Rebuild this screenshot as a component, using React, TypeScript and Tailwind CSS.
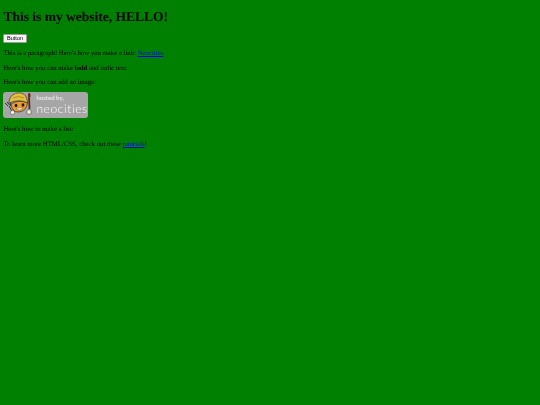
export default function App() {
  return (
    <div className="flow-root min-h-[405px] bg-[#008000] px-[3.375px] text-black font-['Liberation_Serif',serif] text-[6.75px] leading-[9px] [text-rendering:geometricPrecision]">
      <div className="blur-[0.2px]">
        <h1 className="mt-[9.05px] mb-[9.05px] text-[13.5px] leading-[15.6px] font-bold">This is my website, HELLO!</h1>
        <button className="mb-[6.75px] block h-[9px] w-[23.4px] rounded-[1.3px] border-[0.85px] border-[#9a9a9a] bg-[#f4f4f4] font-['Liberation_Sans',sans-serif] text-[5.6px] leading-[6px] text-black">Button</button>
        <p className="my-[5.35px]">This is a paragraph! Here's how you make a link: <a className="text-[#0000ee] underline" href="#">Neocities</a>.</p>
        <p className="my-[5.35px]">Here's how you can make <strong>bold</strong> and <em>italic</em> text.</p>
        <p className="my-[5.35px]">Here's how you can add an image:</p>
        <div className="mt-[5.35px] mb-[6.75px] h-[26px] w-[85px]">
          <div className="relative h-[26px] w-[85px] rounded-[3px] bg-[#a6a6a6]">
            <svg className="absolute left-0 top-0" width="32" height="26" viewBox="0 0 32 26">
              <path d="M2 11 L5 14 M4 10 L6.5 13 M7 10 L7.5 14 M6 14 L9 19" stroke="#333" strokeWidth="1" fill="none" />
              <circle cx="9.5" cy="20.5" r="2.2" fill="#f4f0e0" stroke="#444" strokeWidth="0.6" />
              <path d="M26 3 L26.5 17" stroke="#5a2d12" strokeWidth="1.8" />
              <path d="M25 2 L26 0.5 L27.5 2 L27.5 5 L25.5 5Z" fill="#7a2a1a" />
              <circle cx="26" cy="20" r="2.4" fill="#f4f0e0" stroke="#444" strokeWidth="0.6" />
              <path d="M8 12 Q9 20 15 20 Q23 20 24.5 11 Q16 7 8 12Z" fill="#ee9a2c" stroke="#333" strokeWidth="0.7" />
              <path d="M6 9 Q8 1 16 0.8 Q22 1 23.5 6 L25 11 Q16 6.5 6 11Z" fill="#e2bf3e" stroke="#333" strokeWidth="0.7" />
              <path d="M10 6 Q15 3 21 6" stroke="#a87f20" strokeWidth="0.8" fill="none" />
              <ellipse cx="13" cy="13.5" rx="1.4" ry="1.7" fill="#1d1d1d" />
              <ellipse cx="20" cy="13" rx="1.4" ry="1.7" fill="#1d1d1d" />
              <path d="M13 16.5 Q16.5 19.5 20 16 Q16.5 15.5 13 16.5Z" fill="#fff4dc" stroke="#555" strokeWidth="0.4" />
            </svg>
            <div className="absolute left-[33px] top-[2.2px] font-['Lato',sans-serif] text-[6px] leading-[7px] font-bold text-[#e6e6e6]">hosted by,</div>
            <div className="absolute left-[33px] top-[10.66px] font-['Lato',sans-serif] text-[12px] leading-[12px] font-light tracking-[0.6px] text-white">neocities</div>
          </div>
        </div>
        <p className="my-[5.35px]">Here's how to make a list:</p>
        <p className="my-[5.35px]">To learn more HTML/CSS, check out these <a className="text-[#0000ee] underline" href="#">tutorials</a>!</p>
      </div>
    </div>
  );
}
